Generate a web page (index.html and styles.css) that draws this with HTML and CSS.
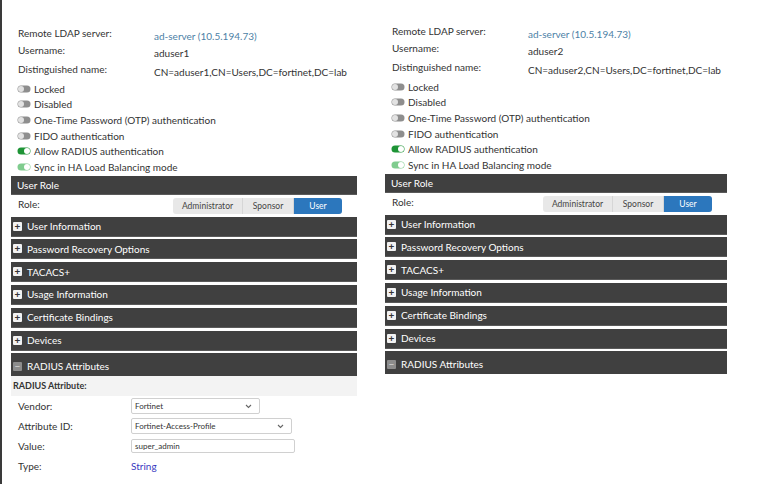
FILE: index.html
```html
<!DOCTYPE html>
<html lang="en">
<head>
    <meta charset="UTF-8">
    <meta name="viewport" content="width=device-width, initial-scale=1.0">
    <title>User settings</title>
    <link rel="stylesheet" href="styles.css">
</head>
<body>
    <div id="container">

        <div class="panel left_panel">
            <div class="info">
                <div class="info_row"><span class="label">Remote LDAP server:</span><span class="value link">ad-server (10.5.194.73)</span></div>
                <div class="info_row"><span class="label">Username:</span><span class="value">aduser1</span></div>
                <div class="info_row"><span class="label">Distinguished name:</span><span class="value">CN=aduser1,CN=Users,DC=fortinet,DC=lab</span></div>
            </div>
            <div class="toggles">
                <div class="toggle_row"><svg class="toggle" width="14" height="8" viewBox="0 0 14 8"><rect x="0.5" y="0.5" width="13" height="7" rx="3.5" fill="#8e8e8e"/><circle cx="4" cy="4" r="3" fill="#e2e2e2"/></svg>Locked</div>
                <div class="toggle_row"><svg class="toggle" width="14" height="8" viewBox="0 0 14 8"><rect x="0.5" y="0.5" width="13" height="7" rx="3.5" fill="#8e8e8e"/><circle cx="4" cy="4" r="3" fill="#e2e2e2"/></svg>Disabled</div>
                <div class="toggle_row"><svg class="toggle" width="14" height="8" viewBox="0 0 14 8"><rect x="0.5" y="0.5" width="13" height="7" rx="3.5" fill="#8e8e8e"/><circle cx="4" cy="4" r="3" fill="#e2e2e2"/></svg>One-Time Password (OTP) authentication</div>
                <div class="toggle_row"><svg class="toggle" width="14" height="8" viewBox="0 0 14 8"><rect x="0.5" y="0.5" width="13" height="7" rx="3.5" fill="#8e8e8e"/><circle cx="4" cy="4" r="3" fill="#e2e2e2"/></svg>FIDO authentication</div>
                <div class="toggle_row"><svg class="toggle" width="14" height="8" viewBox="0 0 14 8"><rect x="0.5" y="0.5" width="13" height="7" rx="3.5" fill="#1e9436"/><circle cx="10" cy="4" r="3" fill="#ffffff"/></svg>Allow RADIUS authentication</div>
                <div class="toggle_row"><svg class="toggle" width="14" height="8" viewBox="0 0 14 8"><rect x="0.5" y="0.5" width="13" height="7" rx="3.5" fill="#7fcc8e"/><circle cx="10" cy="4" r="3" fill="#ffffff"/></svg>Sync in HA Load Balancing mode</div>
            </div>

            <div class="bar bar_plain">User Role</div>
            <div class="role_row">
                <span class="label">Role:</span>
                <div class="segments">
                    <span class="seg">Administrator</span>
                    <span class="seg">Sponsor</span>
                    <span class="seg seg_on">User</span>
                </div>
            </div>

            <div class="sections">
                <div class="bar"><span class="box">+</span>User Information</div>
                <div class="bar"><span class="box">+</span>Password Recovery Options</div>
                <div class="bar"><span class="box">+</span>TACACS+</div>
                <div class="bar"><span class="box">+</span>Usage Information</div>
                <div class="bar"><span class="box">+</span>Certificate Bindings</div>
                <div class="bar"><span class="box">+</span>Devices</div>
                <div class="bar bar_open"><span class="box box_minus">&minus;</span>RADIUS Attributes</div>
            </div>

            <div class="sub_head">RADIUS Attribute:</div>
            <div class="form">
                <div class="form_row">
                    <span class="label">Vendor:</span>
                    <div class="dropdown dd_vendor">Fortinet<svg width="7" height="5" viewBox="0 0 7 5"><path d="M1 1 L3.5 3.5 L6 1" fill="none" stroke="#666" stroke-width="1.1"/></svg></div>
                </div>
                <div class="form_row">
                    <span class="label">Attribute ID:</span>
                    <div class="dropdown dd_attr">Fortinet-Access-Profile<svg width="7" height="5" viewBox="0 0 7 5"><path d="M1 1 L3.5 3.5 L6 1" fill="none" stroke="#666" stroke-width="1.1"/></svg></div>
                </div>
                <div class="form_row">
                    <span class="label">Value:</span>
                    <div class="textbox">super_admin</div>
                </div>
                <div class="form_row">
                    <span class="label">Type:</span>
                    <span class="type_val">String</span>
                </div>
            </div>
        </div>

        <div class="panel right_panel">
            <div class="info">
                <div class="info_row"><span class="label">Remote LDAP server:</span><span class="value link">ad-server (10.5.194.73)</span></div>
                <div class="info_row"><span class="label">Username:</span><span class="value">aduser2</span></div>
                <div class="info_row"><span class="label">Distinguished name:</span><span class="value">CN=aduser2,CN=Users,DC=fortinet,DC=lab</span></div>
            </div>
            <div class="toggles">
                <div class="toggle_row"><svg class="toggle" width="14" height="8" viewBox="0 0 14 8"><rect x="0.5" y="0.5" width="13" height="7" rx="3.5" fill="#8e8e8e"/><circle cx="4" cy="4" r="3" fill="#e2e2e2"/></svg>Locked</div>
                <div class="toggle_row"><svg class="toggle" width="14" height="8" viewBox="0 0 14 8"><rect x="0.5" y="0.5" width="13" height="7" rx="3.5" fill="#8e8e8e"/><circle cx="4" cy="4" r="3" fill="#e2e2e2"/></svg>Disabled</div>
                <div class="toggle_row"><svg class="toggle" width="14" height="8" viewBox="0 0 14 8"><rect x="0.5" y="0.5" width="13" height="7" rx="3.5" fill="#8e8e8e"/><circle cx="4" cy="4" r="3" fill="#e2e2e2"/></svg>One-Time Password (OTP) authentication</div>
                <div class="toggle_row"><svg class="toggle" width="14" height="8" viewBox="0 0 14 8"><rect x="0.5" y="0.5" width="13" height="7" rx="3.5" fill="#8e8e8e"/><circle cx="4" cy="4" r="3" fill="#e2e2e2"/></svg>FIDO authentication</div>
                <div class="toggle_row"><svg class="toggle" width="14" height="8" viewBox="0 0 14 8"><rect x="0.5" y="0.5" width="13" height="7" rx="3.5" fill="#1e9436"/><circle cx="10" cy="4" r="3" fill="#ffffff"/></svg>Allow RADIUS authentication</div>
                <div class="toggle_row"><svg class="toggle" width="14" height="8" viewBox="0 0 14 8"><rect x="0.5" y="0.5" width="13" height="7" rx="3.5" fill="#7fcc8e"/><circle cx="10" cy="4" r="3" fill="#ffffff"/></svg>Sync in HA Load Balancing mode</div>
            </div>

            <div class="bar bar_plain">User Role</div>
            <div class="role_row">
                <span class="label">Role:</span>
                <div class="segments">
                    <span class="seg">Administrator</span>
                    <span class="seg">Sponsor</span>
                    <span class="seg seg_on">User</span>
                </div>
            </div>

            <div class="sections">
                <div class="bar"><span class="box">+</span>User Information</div>
                <div class="bar"><span class="box">+</span>Password Recovery Options</div>
                <div class="bar"><span class="box">+</span>TACACS+</div>
                <div class="bar"><span class="box">+</span>Usage Information</div>
                <div class="bar"><span class="box">+</span>Certificate Bindings</div>
                <div class="bar"><span class="box">+</span>Devices</div>
                <div class="bar bar_open"><span class="box box_minus">&minus;</span>RADIUS Attributes</div>
            </div>
        </div>

    </div>
</body>
</html>
```

FILE: styles.css
```css
body{
    margin: 0;
    background: #ffffff;
    font-family: Lato, "Open Sans", sans-serif;
    color: #333333;
    font-size: 10px;
}

#container{
    display: flex;
    gap: 28px;
    min-height: 484px;
    border-left: 2px solid #3a3a3a;
    box-sizing: border-box;
    padding-left: 9px;
}

.panel{
    display: flex;
    flex-direction: column;
}

.left_panel{
    width: 346px;
    padding-top: 26px;
}

.right_panel{
    width: 342px;
    padding-top: 24px;
}

.info_row{
    display: flex;
    padding-left: 7px;
}

.info_row:nth-child(1){ height: 17px; }
.info_row:nth-child(2){ height: 19px; }
.info_row:nth-child(3){ height: 19px; }

.label{
    line-height: 15px;
    flex-shrink: 0;
}

.info_row .label{
    width: 136px;
}

.value{
    padding-top: 3px;
    line-height: 15px;
    white-space: nowrap;
}

.link{
    color: #4d7fa6;
}

.toggles{
    padding-left: 6px;
    margin-bottom: 1px;
}

.toggle_row{
    display: flex;
    align-items: center;
    height: 15.6px;
}

.toggle{
    margin-right: 3px;
}

.bar{
    display: flex;
    align-items: center;
    height: 20px;
    background: #404040;
    color: #ffffff;
    font-size: 10px;
    padding-left: 2px;
    border-bottom: 1px solid #5a5a5a;
    box-sizing: border-box;
}

.bar_plain{
    height: 19px;
    padding-left: 6px;
}

.bar_open{
    height: 23px;
    padding-top: 3px;
    border-bottom: none;
}

.box{
    display: inline-flex;
    align-items: center;
    justify-content: center;
    width: 9px;
    height: 9px;
    background: #f2f2f2;
    color: #333333;
    font-size: 10px;
    font-weight: bold;
    line-height: 9px;
    margin-right: 5px;
    border-radius: 1px;
}

.box_minus{
    background: #8c8c8c;
    color: #c8c8c8;
}

.role_row{
    display: flex;
    justify-content: space-between;
    align-items: flex-start;
    height: 22px;
    padding: 0 15px 0 7px;
}

.role_row .label{
    line-height: 18px;
}

.segments{
    display: flex;
    margin-top: 3px;
    height: 16px;
    background: #e8e8e8;
    border-radius: 3px;
    font-size: 8.5px;
    overflow: hidden;
}

.seg{
    display: flex;
    align-items: center;
    justify-content: center;
    padding: 0 11px;
    color: #444444;
    border-right: 1px solid #d6d6d6;
}

.seg:first-child{
    width: 47px;
}

.seg:nth-child(2){
    width: 28px;
}

.seg_on{
    width: 26px;
    background: #2c77bd;
    color: #ffffff;
    border-right: none;
}

.sections{
    display: flex;
    flex-direction: column;
    gap: 2.8px;
}

.sub_head{
    height: 20px;
    background: #f3f3f3;
    font-size: 9px;
    font-weight: bold;
    line-height: 20px;
    padding-left: 2px;
}

.form{
    padding-left: 7px;
}

.form_row{
    display: flex;
    align-items: center;
    height: 20px;
}

.form_row .label{
    width: 113px;
}

.dropdown{
    display: flex;
    justify-content: space-between;
    align-items: center;
    height: 16px;
    box-sizing: border-box;
    border: 1px solid #d0d0d0;
    border-radius: 2px;
    font-size: 8px;
    padding: 0 7px 0 3px;
}

.dd_vendor{
    width: 129px;
}

.dd_attr{
    width: 161px;
}

.textbox{
    width: 164px;
    height: 14px;
    box-sizing: border-box;
    border: 1px solid #d0d0d0;
    border-radius: 2px;
    font-size: 8px;
    line-height: 12px;
    padding-left: 3px;
}

.type_val{
    color: #3a3abf;
    font-size: 10px;
}
```
